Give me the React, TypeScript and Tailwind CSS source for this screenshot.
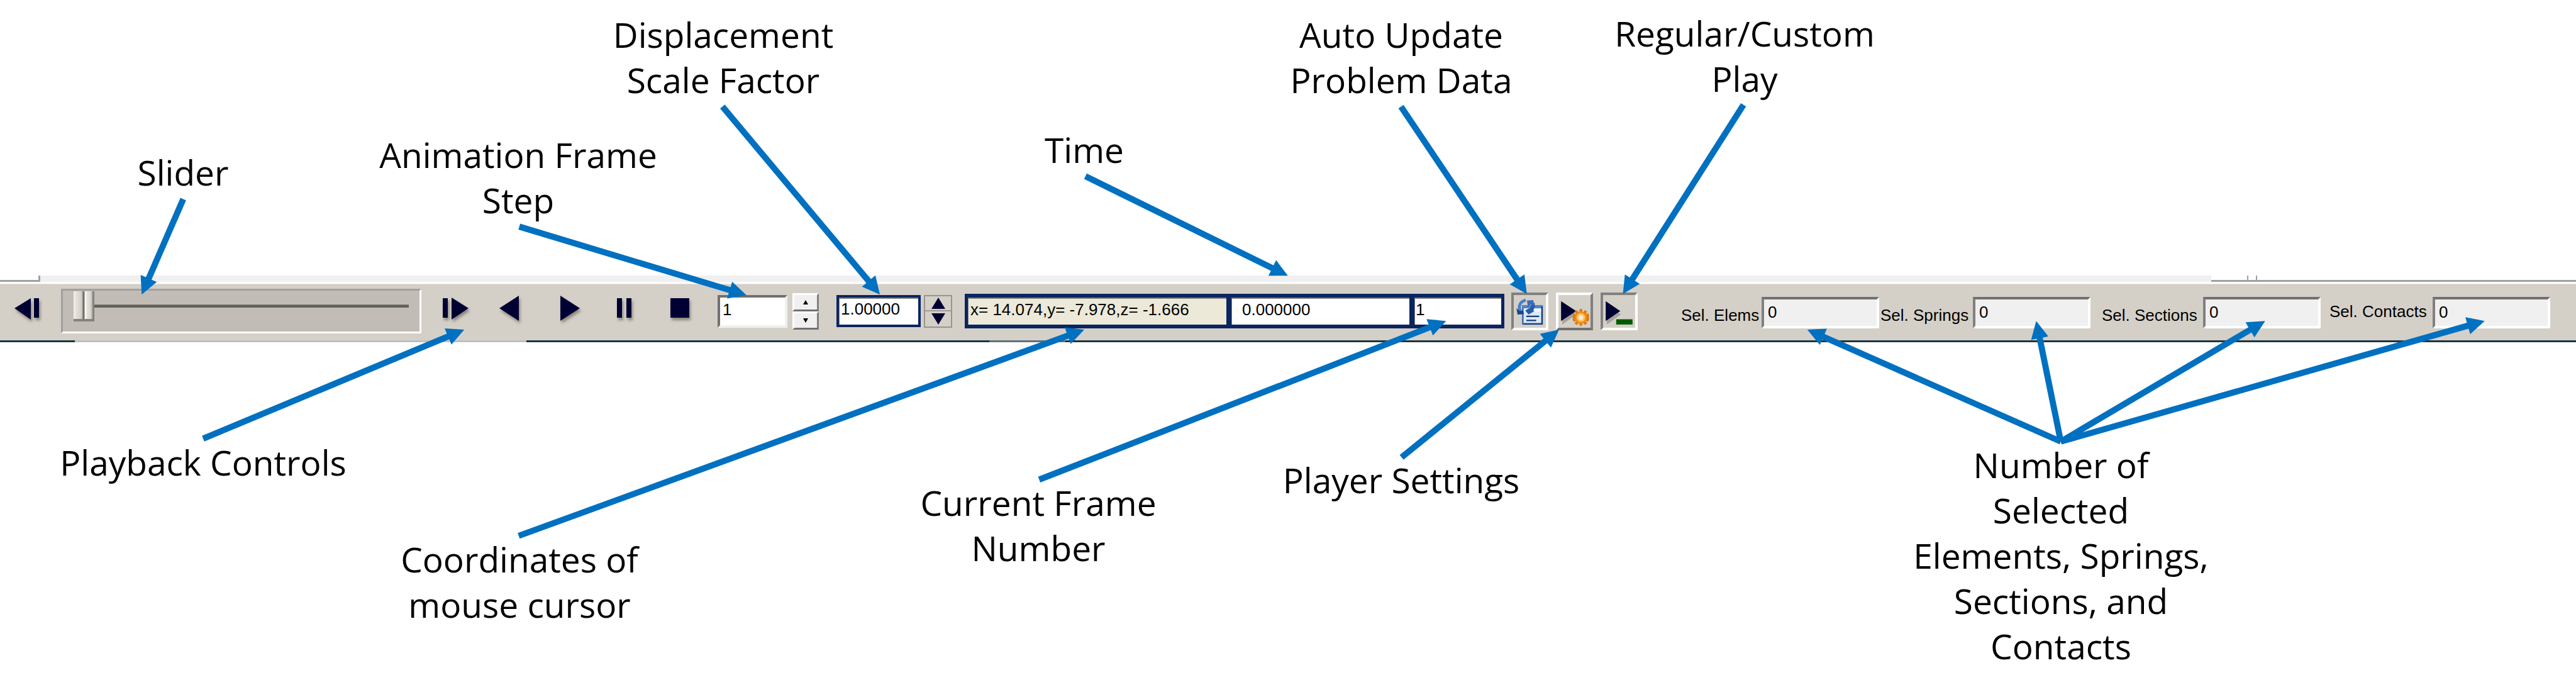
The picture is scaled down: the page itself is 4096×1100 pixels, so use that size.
import type { ReactNode } from "react";

type Callout = { lines: string[]; place: string };

const callouts: Callout[] = [
  { lines: ["Slider"], place: "left-[141px] top-[238px] w-[300px]" },
  { lines: ["Animation Frame", "Step"], place: "left-[574px] top-[210px] w-[500px]" },
  { lines: ["Displacement", "Scale Factor"], place: "left-[900px] top-[19px] w-[500px]" },
  { lines: ["Time"], place: "left-[1574px] top-[202px] w-[300px]" },
  { lines: ["Auto Update", "Problem Data"], place: "left-[1978px] top-[19px] w-[500px]" },
  { lines: ["Regular/Custom", "Play"], place: "left-[2524px] top-[17px] w-[500px]" },
  { lines: ["Playback Controls"], place: "left-[23px] top-[699px] w-[600px]" },
  { lines: ["Coordinates of", "mouse cursor"], place: "left-[576px] top-[853px] w-[500px]" },
  { lines: ["Current Frame", "Number"], place: "left-[1401px] top-[763px] w-[500px]" },
  { lines: ["Player Settings"], place: "left-[1928px] top-[727px] w-[600px]" },
  {
    lines: ["Number of", "Selected", "Elements, Springs,", "Sections, and", "Contacts"],
    place: "left-[2977px] top-[703px] w-[600px]",
  },
];

type Line = [number, number, number, number];

const arrows: Line[] = [
  [313, 340, 242, 503],
  [887, 387, 1275, 504],
  [1234, 182, 1503, 503],
  [2393, 182, 2608, 502],
  [2978, 179, 2772, 502],
  [347, 749, 793, 563],
  [886, 915, 1852, 563],
  [1775, 819, 2470, 548],
  [2394, 781, 2663, 563],
  [3520, 754, 3087, 563],
  [3520, 754, 3478, 548],
  [3520, 754, 3869, 548],
  [3520, 754, 4244, 548],
];

function Arrow({ line }: { line: Line }) {
  const [x1, y1, x2, y2] = line;
  const len = Math.hypot(x2 - x1, y2 - y1);
  const ux = (x2 - x1) / len;
  const uy = (y2 - y1) / len;
  const bx = x2 - ux * 30;
  const by = y2 - uy * 30;
  return (
    <g>
      <line x1={x1} y1={y1} x2={bx + ux * 3} y2={by + uy * 3} stroke="#0070c0" strokeWidth="10.5" />
      <polygon
        fill="#0070c0"
        points={`${x2},${y2} ${bx - uy * 15},${by + ux * 15} ${bx + uy * 15},${by - ux * 15}`}
      />
    </g>
  );
}

function PlaybackButton({ label, children }: { label: string; children: ReactNode }) {
  return (
    <button type="button" aria-label={label} className="shrink-0">
      <svg viewBox="0 0 48 56" className="h-14 w-12 drop-shadow-[2px_4px_2px_rgba(90,85,75,0.6)]" fill="#000033">
        {children}
      </svg>
    </button>
  );
}

function ToolButton({ label, pressed, children }: { label: string; pressed: boolean; children: ReactNode }) {
  return (
    <button
      type="button"
      aria-label={label}
      aria-pressed={pressed}
      className={
        pressed
          ? "h-[60px] w-[59px] shrink-0 border-4 border-t-[#808080] border-l-[#808080] border-r-white border-b-white"
          : "h-[60px] w-[59px] shrink-0 border-4 border-t-white border-l-white border-r-[#808080] border-b-[#707070]"
      }
    >
      <svg viewBox="4.5 4.5 55 56" className="h-[52px] w-[51px]">
        {children}
      </svg>
    </button>
  );
}

function Triangle() {
  return (
    <g>
      <path d="M19 21 L43 38 L19 55 Z" fill="#6f6b66" opacity="0.45" />
      <path d="M17 15 L42 32 L17 49 Z" fill="#000033" />
    </g>
  );
}

function SelectedCount({ id, label, labelClass }: { id: string; label: string; labelClass: string }) {
  return (
    <div className="flex shrink-0 items-center">
      <label htmlFor={id} className={labelClass}>
        {label}
      </label>
      <input
        id={id}
        defaultValue="0"
        readOnly
        className="h-[50px] w-[187px] border-4 border-t-[#707070] border-l-[#808080] border-r-white border-b-white bg-[#f0f0f0] pl-1.5"
      />
    </div>
  );
}

export default function App() {
  return (
    <main className="relative flex min-h-[1100px] w-full flex-col overflow-hidden bg-white font-['Open_Sans',sans-serif] text-black">
      <div className="h-[438px]" />

      <div className="flex h-[13px] items-start">
        <div className="h-[10px] w-[64px] border-r-[3px] border-b-[3px] border-[#a0a0a0]" />
        <div className="h-[10px] flex-1 bg-[#f0f0f0]" />
        <div className="flex h-[10px] w-[580px] border-b-[3px] border-[#a0a0a0] pl-[57px]">
          <div className="w-4 border-x-2 border-[#a0a0a0]" />
        </div>
      </div>

      <section
        aria-label="Animation toolbar"
        className="flex h-[90px] items-center border-t border-[#e6e2da] bg-[#d4d0c8] pr-[41px] pb-1 pl-[19px] font-['Liberation_Sans',Arial,sans-serif] text-[26px] leading-[32px]"
      >
        <PlaybackButton label="Step back">
          <path d="M4 23 L30 7 V41 Z M35 7 h8 v31 h-8 Z" />
        </PlaybackButton>

        <div className="ml-[30px] h-[71px] flex-1 border-[3px] border-t-[#a0a0a0] border-l-[#a0a0a0] border-r-white border-b-white bg-[#c1bcb5] px-[17px]">
          <input
            type="range"
            aria-label="Animation position"
            min={0}
            max={100}
            defaultValue={0}
            className="block h-[49px] w-full appearance-none bg-[linear-gradient(#807d78,#5a5955_50%,#6a6864)] bg-[length:100%_5px] bg-center bg-no-repeat [&::-webkit-slider-thumb]:h-[48px] [&::-webkit-slider-thumb]:w-[33px] [&::-webkit-slider-thumb]:appearance-none [&::-webkit-slider-thumb]:border-b-4 [&::-webkit-slider-thumb]:border-[#85827c] [&::-webkit-slider-thumb]:bg-[linear-gradient(to_right,#f6f4ee_0px,#e8e4dc_3px,#d4d0c8_12px,#bdb9b1_14px,#6d6b67_15px,#6d6b67_17px,#ffffff_18px,#e8e4dc_21px,#d4d0c8_28px,#808080_31px)]"
          />
        </div>

        <div className="ml-[30px] flex shrink-0 gap-[41px]">
          <PlaybackButton label="Step forward">
            <path d="M4 7 h8 v31 h-8 Z M18 6 L45 23 L18 41 Z" />
          </PlaybackButton>
          <PlaybackButton label="Play backward">
            <path d="M5 23 L36 3 V43 Z" />
          </PlaybackButton>
          <PlaybackButton label="Play">
            <path d="M13 3 L44 23 L13 43 Z" />
          </PlaybackButton>
          <PlaybackButton label="Pause">
            <path d="M14 7 h8 v31 h-8 Z M29 7 h8 v31 h-8 Z" />
          </PlaybackButton>
          <PlaybackButton label="Stop">
            <path d="M10 7 h30 v31 h-30 Z" />
          </PlaybackButton>
        </div>

        <div className="ml-[37px] flex shrink-0 items-center gap-2">
          <input
            aria-label="Animation frame step"
            defaultValue="1"
            className="h-[52px] w-[111px] border-4 border-t-[#707070] border-l-[#707070] border-r-[#f0f0f0] border-b-[#f0f0f0] bg-white pb-1 pl-1"
          />
          <div className="flex flex-col">
            <button
              type="button"
              aria-label="Increase frame step"
              className="flex h-[29px] w-[42px] items-center justify-center border-[3px] border-t-white border-l-white border-r-[#808080] border-b-[#707070] bg-[#f0f0f0]"
            >
              <svg viewBox="0 0 8 7" className="h-[7px] w-2">
                <path d="M4 0 L8 7 H0 Z" />
              </svg>
            </button>
            <button
              type="button"
              aria-label="Decrease frame step"
              className="flex h-[29px] w-[42px] items-center justify-center border-[3px] border-t-white border-l-white border-r-[#808080] border-b-[#707070] bg-[#f0f0f0]"
            >
              <svg viewBox="0 0 8 7" className="h-[7px] w-2">
                <path d="M0 0 H8 L4 7 Z" />
              </svg>
            </button>
          </div>
        </div>

        <div className="ml-[28px] flex shrink-0 items-center gap-[5px]">
          <input
            aria-label="Displacement scale factor"
            defaultValue="1.00000"
            className="h-[51px] w-[134px] border-4 border-[#0a2560] bg-white pb-1.5 pl-[3px] shadow-[inset_1px_2px_0_#808080]"
          />
          <div className="flex flex-col divide-y-2 divide-[#a09d96] border-2 border-[#98958e]">
            <button type="button" aria-label="Increase scale factor" className="flex h-6 w-[41px] items-center justify-center">
              <svg viewBox="0 0 22 18" className="h-[18px] w-[22px]" fill="#000033">
                <path d="M11 0 L22 18 H0 Z" />
              </svg>
            </button>
            <button type="button" aria-label="Decrease scale factor" className="flex h-6 w-[41px] items-center justify-center">
              <svg viewBox="0 0 22 18" className="h-[18px] w-[22px]" fill="#000033">
                <path d="M0 0 H22 L11 18 Z" />
              </svg>
            </button>
          </div>
        </div>

        <div className="ml-[20px] flex h-[55px] w-[858px] shrink-0 gap-2 border-x-[5px] border-y-[6px] border-[#0a2560] bg-[#0a2560]">
          <input
            aria-label="Coordinates of mouse cursor"
            defaultValue="x= 14.074,y= -7.978,z= -1.666"
            readOnly
            className="w-[411px] bg-[#ece9d8] pb-1.5 pl-1 shadow-[inset_1px_2px_0_#808080]"
          />
          <input
            aria-label="Time"
            defaultValue="0.000000"
            className="w-[283px] bg-white pb-1.5 pl-[17px] shadow-[inset_1px_2px_0_#808080]"
          />
          <input
            aria-label="Current frame number"
            defaultValue="1"
            className="min-w-0 flex-1 bg-white pb-1.5 pl-0.5 shadow-[inset_1px_2px_0_#808080]"
          />
        </div>

        <div className="ml-[11px] flex shrink-0 gap-3">
          <ToolButton label="Auto update problem data" pressed>
            <rect x="20" y="23" width="33" height="31" fill="#d9e8fb" stroke="#2f62ae" strokeWidth="2.5" />
            <path d="M19 22 H54 V27 H19 Z" fill="#4f83cf" />
            <path d="M22 28 H51 V33 H22 Z" fill="#f4f9ff" />
            <path d="M53 24 V54 H22" fill="none" stroke="#173f7c" strokeWidth="2.5" />
            <path d="M26 41 H48 M26 48 H43" stroke="#1d3c70" strokeWidth="2.5" />
            <path d="M25 13 C14 16 12 25 16 32" fill="none" stroke="#4a7ecb" strokeWidth="5" />
            <path d="M9 27 L11 38 L22 37 L20 31 L15 32 Z" fill="#16477f" />
            <path d="M37 18 C39 26 35 31 28 34" fill="none" stroke="#2a5ba8" strokeWidth="6" />
            <path d="M27 14 L38 13 L39 23 L34 20 L29 25 Z" fill="#3a6cbd" />
            <path d="M24 31 L31 27 L40 32 L30 38 Z" fill="#2b5c9f" />
          </ToolButton>
          <ToolButton label="Player settings" pressed={false}>
            <path d="M11 21 L35 38 L11 55 Z" fill="#6f6b66" opacity="0.45" />
            <path d="M9 15 L35 32 L9 49 Z" fill="#000033" />
            <g stroke="#e07a10" strokeWidth="5">
              <path d="M43 28.500 V57 M29 43 H57 M34 31.500 L52 54.500 M52 31.500 L34 54.500 M29.500 38 L56.500 48 M29.500 48 L56.500 38" />
            </g>
            <circle cx="43" cy="43" r="9" fill="#ffc65c" stroke="#ee8a18" strokeWidth="3" />
            <circle cx="43" cy="43" r="4" fill="#f6ecd8" />
          </ToolButton>
          <ToolButton label="Regular or custom play" pressed>
            <g transform="translate(-8 0)">
              <Triangle />
            </g>
            <rect x="27" y="46" width="28" height="9" fill="#005a00" />
          </ToolButton>
        </div>

        <div className="ml-[69px] flex shrink-0 items-center pt-1">
          <SelectedCount id="sel-elems" label="Sel. Elems" labelClass="w-[128px] pt-2" />
          <div className="w-0.5" />
          <SelectedCount id="sel-springs" label="Sel. Springs" labelClass="w-[147px] pt-2" />
          <div className="w-[18px]" />
          <SelectedCount id="sel-sections" label="Sel. Sections" labelClass="w-[161px] pt-2" />
          <div className="w-[14px]" />
          <SelectedCount id="sel-contacts" label="Sel. Contacts" labelClass="w-[164px] pb-1" />
        </div>
      </section>

      <div className="flex h-[3px]">
        <div className="w-[119px] bg-[#1b3440]" />
        <div className="w-[718px] bg-[#c0c0c0]" />
        <div className="w-[736px] bg-[#1b3440]" />
        <div className="w-[121px] bg-[#5f7078]" />
        <div className="flex-1 bg-[#1b3440]" />
      </div>

      {callouts.map((c) => (
        <p key={c.lines[0]} className={`absolute text-center text-[55px] leading-[72px] whitespace-nowrap ${c.place}`}>
          {c.lines.map((line) => (
            <span key={line} className="block">
              {line}
            </span>
          ))}
        </p>
      ))}

      <svg viewBox="0 0 4400 1182" className="pointer-events-none absolute top-0 left-0 w-full" aria-hidden="true">
        <defs>
          <clipPath id="above-toolbar">
            <rect x="0" y="0" width="4400" height="471" />
          </clipPath>
        </defs>
        {arrows.map((line) => (
          <Arrow key={line.join()} line={line} />
        ))}
        <g clipPath="url(#above-toolbar)">
          <Arrow line={[1854, 301, 2200, 471]} />
        </g>
      </svg>
    </main>
  );
}
